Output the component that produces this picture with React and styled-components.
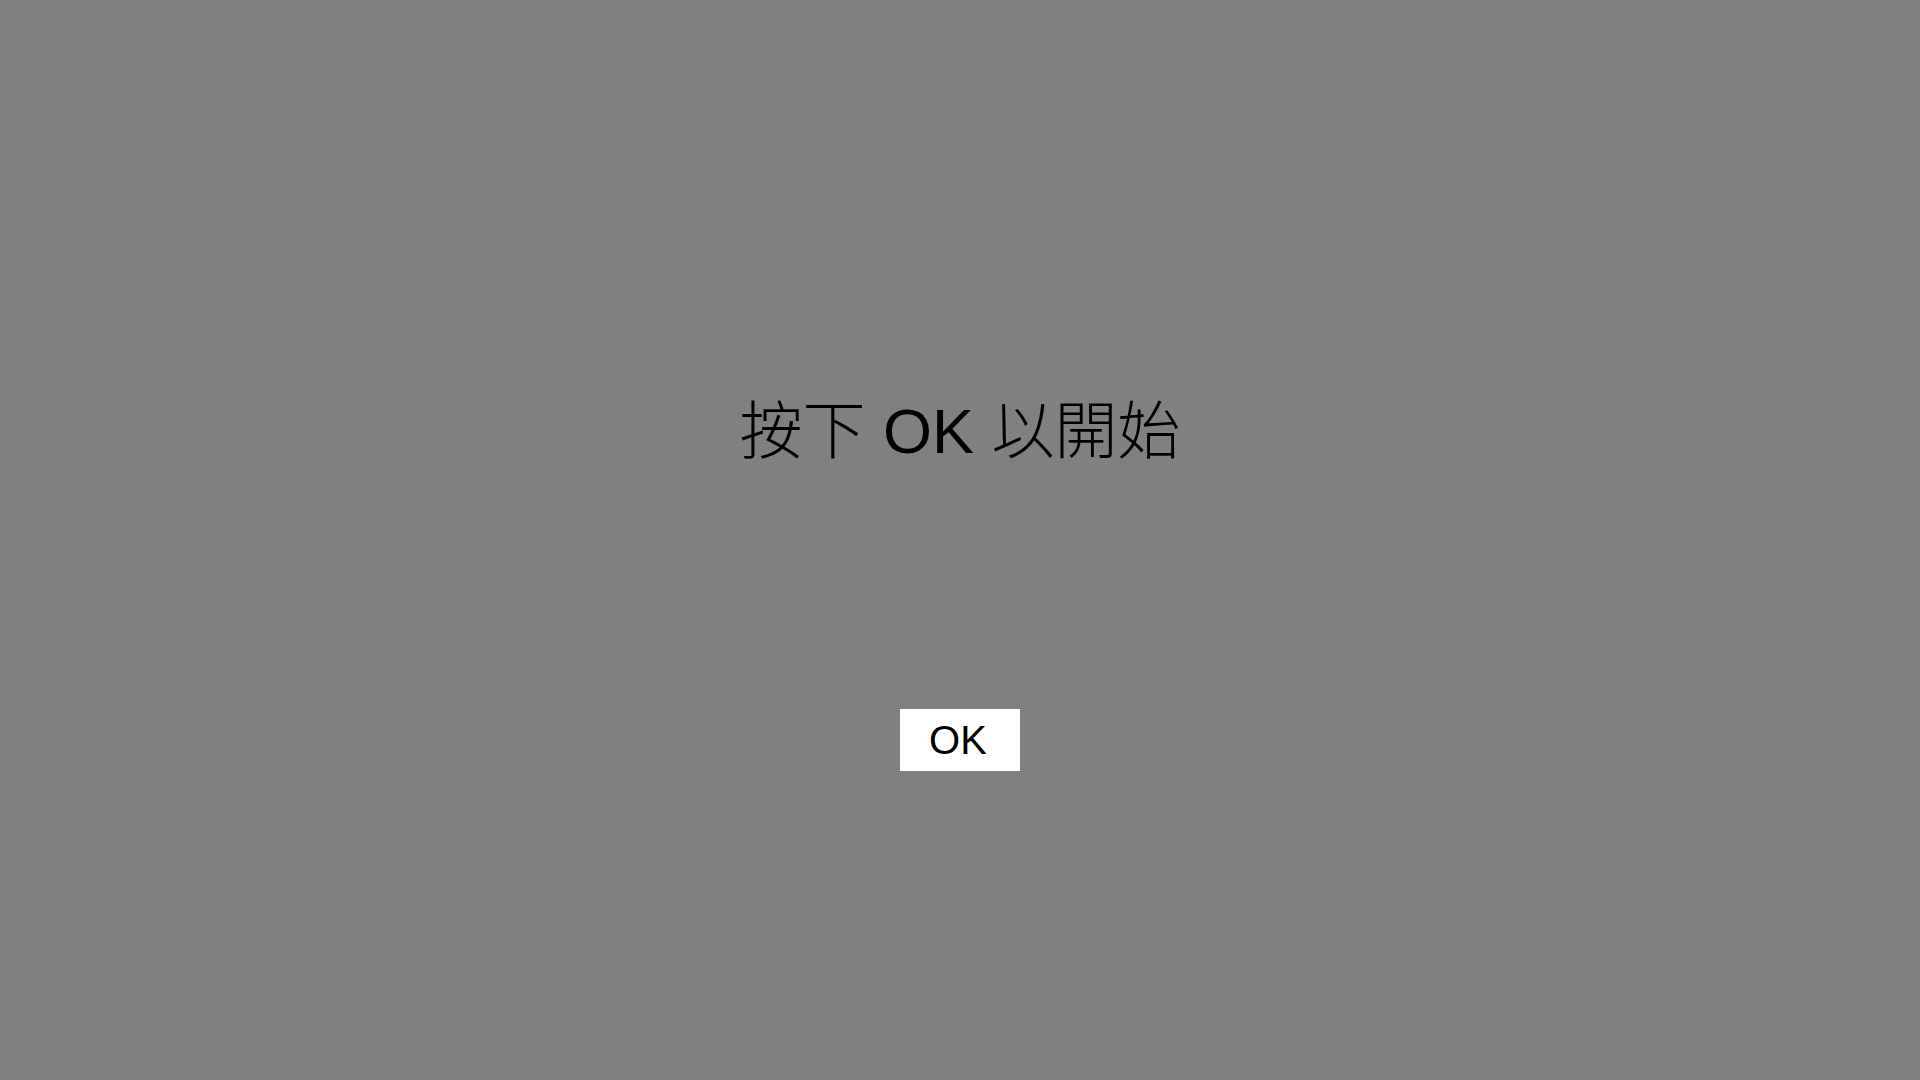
import React from 'react'
import styled, { createGlobalStyle } from 'styled-components'

const GlobalStyle = createGlobalStyle`
    html, body {
        margin: 0;
        padding: 0;
        background: #808080;
    }
    #root {
        min-height: 100vh;
    }
`;

const Screen = styled.div`
    height: 1080px;
    background: #808080;
    display: flex;
    flex-direction: column;
    align-items: center;
    padding-top: 400px;
    box-sizing: border-box;
    font-family: "Liberation Sans", "Noto Sans CJK TC", sans-serif;
`;

const Prompt = styled.h1`
    margin: 0;
    height: 62px;
    line-height: 62px;
    font-size: 63px;
    font-weight: 300;
    color: #000;
    white-space: nowrap;
`;

const OkButton = styled.button`
    margin-top: 247px;
    width: 120px;
    height: 62px;
    border: none;
    border-radius: 0;
    padding: 0 4px 0 0;
    background: #fff;
    color: #000;
    font-family: "Liberation Sans", Arial, sans-serif;
    font-size: 40px;
    line-height: 62px;
    cursor: pointer;
`;

export default function App() {
    return (
        <>
            <GlobalStyle />
            <Screen>
                <Prompt>按下 OK 以開始</Prompt>
                <OkButton>OK</OkButton>
            </Screen>
        </>
    );
}
